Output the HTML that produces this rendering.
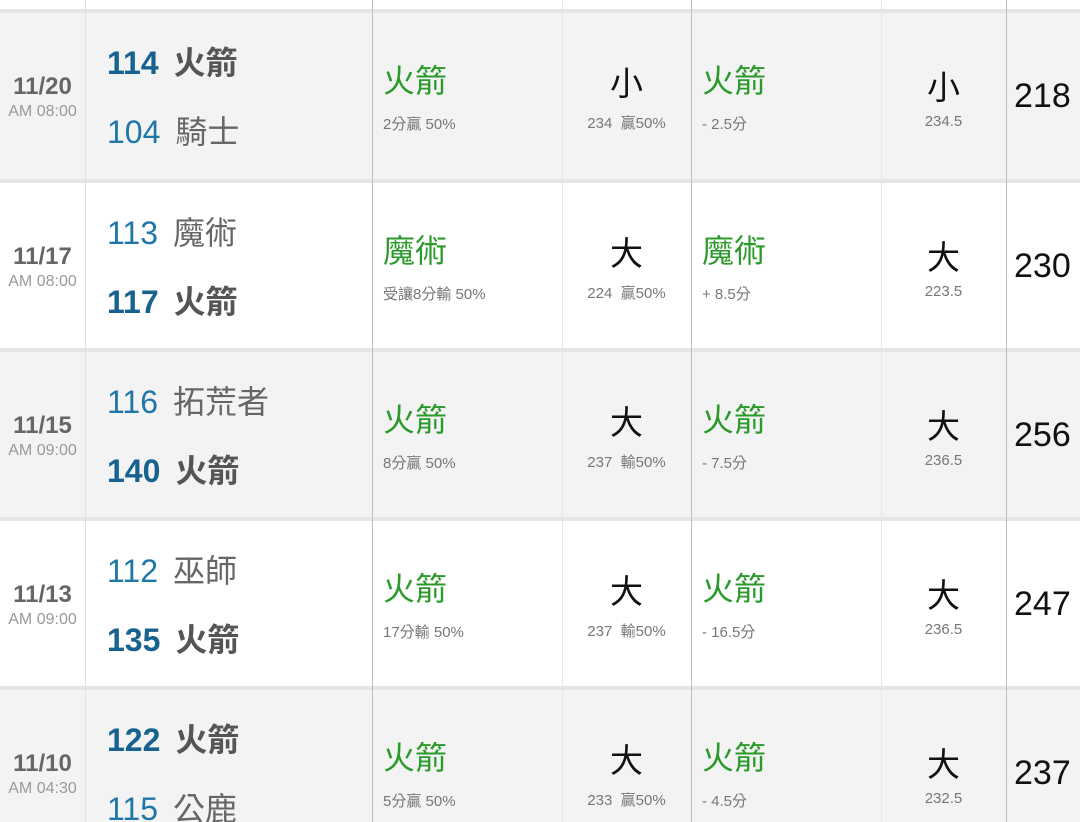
<!DOCTYPE html>
<html style="overflow:hidden;height:822px"><head><meta charset="utf-8"><style>
*{margin:0;padding:0;box-sizing:border-box}
body{width:1080px;height:822px;overflow:hidden;background:#fff;position:relative;font-family:"Liberation Sans","Noto Sans CJK TC",sans-serif}
.sep{position:absolute;left:0;width:1080px;height:4px;background:#e5e5e5}
.row{position:absolute;left:0;width:1080px;height:166px;overflow:hidden}
.g{background:#f3f3f3}
.vl{position:absolute;top:0;height:822px;width:1px;z-index:5}
.a{position:absolute;white-space:nowrap;line-height:1}
.date{left:0;width:85px;text-align:center;top:62px;font-size:24px;font-weight:bold;color:#666}
.time{left:0;width:85px;text-align:center;top:91px;font-size:16px;color:#999}
.t1{left:107px;top:34px;font-size:32px}
.t2{left:107px;top:103px;font-size:32px}
.n{color:#1f77a8}
.nb{color:#17628f;font-weight:bold}
.nm{color:#666;margin-left:15px}
.nmb{color:#555;font-weight:bold;margin-left:15px}
.pk{top:52px;font-size:32px;color:#2a9a2a}
.ps{top:104px;font-size:15px;color:#777}
.c3{left:562px;width:129px;text-align:center}
.c5{left:881px;width:125px;text-align:center}
.bg{top:54px;font-size:33px;color:#111}
.bs{top:103px;font-size:15px;color:#777}
.bg5{top:58px}
.bs5{top:101px}
.tot{left:1014px;top:66px;font-size:34px;color:#111}
</style></head><body>
<div class="vl" style="left:85px;background:#e0e0e0"></div>
<div class="vl" style="left:372px;background:#bdbdbd"></div>
<div class="vl" style="left:562px;background:#e6e6e6"></div>
<div class="vl" style="left:691px;background:#bdbdbd"></div>
<div class="vl" style="left:881px;background:#e6e6e6"></div>
<div class="vl" style="left:1006px;background:#bdbdbd"></div>

<div class="sep" style="top:9px"></div>
<div class="row g" style="top:13px">
<div class="a date">11/20</div><div class="a time">AM 08:00</div>
<div class="a t1"><span class="nb">114</span><span class="nmb">火箭</span></div>
<div class="a t2"><span class="n">104</span><span class="nm">騎士</span></div>
<div class="a pk" style="left:383px">火箭</div><div class="a ps" style="left:383px">2分贏 50%</div>
<div class="a c3 bg">小</div><div class="a c3 bs">234&nbsp; 贏50%</div>
<div class="a pk" style="left:702px">火箭</div><div class="a ps" style="left:702px">- 2.5分</div>
<div class="a c5 bg bg5">小</div><div class="a c5 bs bs5">234.5</div>
<div class="a tot">218</div>
</div>

<div class="sep" style="top:179px"></div>
<div class="row" style="top:183px">
<div class="a date">11/17</div><div class="a time">AM 08:00</div>
<div class="a t1"><span class="n">113</span><span class="nm">魔術</span></div>
<div class="a t2"><span class="nb">117</span><span class="nmb">火箭</span></div>
<div class="a pk" style="left:383px">魔術</div><div class="a ps" style="left:383px">受讓8分輸 50%</div>
<div class="a c3 bg">大</div><div class="a c3 bs">224&nbsp; 贏50%</div>
<div class="a pk" style="left:702px">魔術</div><div class="a ps" style="left:702px">+ 8.5分</div>
<div class="a c5 bg bg5">大</div><div class="a c5 bs bs5">223.5</div>
<div class="a tot">230</div>
</div>

<div class="sep" style="top:348px"></div>
<div class="row g" style="top:352px">
<div class="a date">11/15</div><div class="a time">AM 09:00</div>
<div class="a t1"><span class="n">116</span><span class="nm">拓荒者</span></div>
<div class="a t2"><span class="nb">140</span><span class="nmb">火箭</span></div>
<div class="a pk" style="left:383px">火箭</div><div class="a ps" style="left:383px">8分贏 50%</div>
<div class="a c3 bg">大</div><div class="a c3 bs">237&nbsp; 輸50%</div>
<div class="a pk" style="left:702px">火箭</div><div class="a ps" style="left:702px">- 7.5分</div>
<div class="a c5 bg bg5">大</div><div class="a c5 bs bs5">236.5</div>
<div class="a tot">256</div>
</div>

<div class="sep" style="top:517px"></div>
<div class="row" style="top:521px">
<div class="a date">11/13</div><div class="a time">AM 09:00</div>
<div class="a t1"><span class="n">112</span><span class="nm">巫師</span></div>
<div class="a t2"><span class="nb">135</span><span class="nmb">火箭</span></div>
<div class="a pk" style="left:383px">火箭</div><div class="a ps" style="left:383px">17分輸 50%</div>
<div class="a c3 bg">大</div><div class="a c3 bs">237&nbsp; 輸50%</div>
<div class="a pk" style="left:702px">火箭</div><div class="a ps" style="left:702px">- 16.5分</div>
<div class="a c5 bg bg5">大</div><div class="a c5 bs bs5">236.5</div>
<div class="a tot">247</div>
</div>

<div class="sep" style="top:686px"></div>
<div class="row g" style="top:690px;height:132px">
<div class="a date">11/10</div><div class="a time">AM 04:30</div>
<div class="a t1"><span class="nb">122</span><span class="nmb">火箭</span></div>
<div class="a t2"><span class="n">115</span><span class="nm">公鹿</span></div>
<div class="a pk" style="left:383px">火箭</div><div class="a ps" style="left:383px">5分贏 50%</div>
<div class="a c3 bg">大</div><div class="a c3 bs">233&nbsp; 贏50%</div>
<div class="a pk" style="left:702px">火箭</div><div class="a ps" style="left:702px">- 4.5分</div>
<div class="a c5 bg bg5">大</div><div class="a c5 bs bs5">232.5</div>
<div class="a tot">237</div>
</div>
</body></html>
